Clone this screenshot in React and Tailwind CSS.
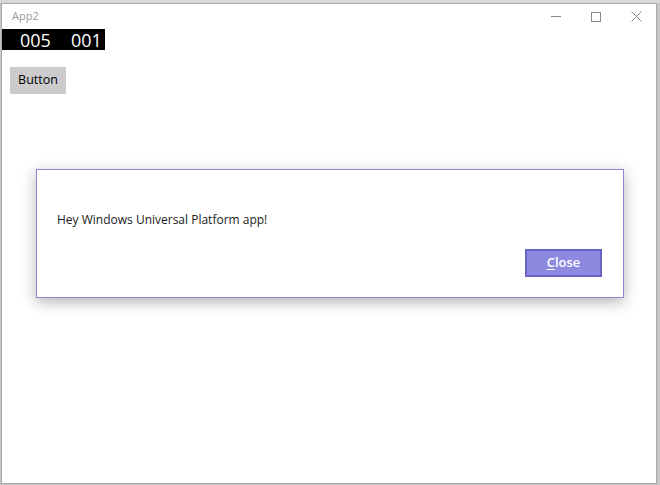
import React from 'react';

const font = { fontFamily: '"Open Sans", "Noto Sans", sans-serif' };

const App = () => {
  return (
    <div className="w-[660px] h-[485px] bg-[#c6c6c6] overflow-hidden" style={font}>
      {/* strip of the window behind */}
      <div className="h-[3px] bg-[#d9d9d9]" />
      <div className="relative ml-[1px] w-[656px] h-[481px] bg-white border border-[#a9a9a9]">
        {/* title bar */}
        <div className="flex items-center h-[25px] pl-[10px]">
          <span className="text-[11px] text-[#9a9a9a]">App2</span>
          <div className="ml-auto flex items-center h-full">
            <div className="w-[40px] h-full flex items-center justify-center">
              <div className="w-[10px] h-px bg-[#8a8a8a]" />
            </div>
            <div className="w-[40px] h-full flex items-center justify-center">
              <div className="w-[10px] h-[10px] border border-[#8a8a8a]" />
            </div>
            <div className="w-[40px] h-full flex items-center justify-center">
              <svg width="11" height="11" viewBox="0 0 11 11">
                <path d="M0.5 0.5 L10.5 10.5 M10.5 0.5 L0.5 10.5" stroke="#8a8a8a" strokeWidth="1" />
              </svg>
            </div>
          </div>
        </div>
        {/* frame counter */}
        <div className="flex items-center w-[103px] h-[21px] bg-black text-white text-[18px] leading-none pl-[18px] gap-[20px]">
          <span>005</span>
          <span>001</span>
        </div>
        {/* button */}
        <div className="pl-[8px] pt-[16px]">
          <button className="h-[27px] w-[56px] bg-[#cccccc] text-[12.5px] text-black">Button</button>
        </div>

        {/* content dialog */}
        <div className="absolute left-[34px] top-[165px] w-[588px] h-[129px] bg-white border border-[#8c87dc] shadow-[0_4px_14px_rgba(0,0,0,0.3)] flex flex-col">
          <p className="pl-[20px] pt-[41px] text-[12px] text-[#1a1a1a]">Hey Windows Universal Platform app!</p>
          <div className="mt-auto flex justify-end pr-[21px] pb-[20px]">
            <button className="w-[77px] h-[28px] bg-[#8e89e0] border-2 border-[#6a64c2] text-white text-[13px] font-semibold">
              <span className="underline underline-offset-2">C</span>lose
            </button>
          </div>
        </div>
      </div>
    </div>
  );
};

export default App;
